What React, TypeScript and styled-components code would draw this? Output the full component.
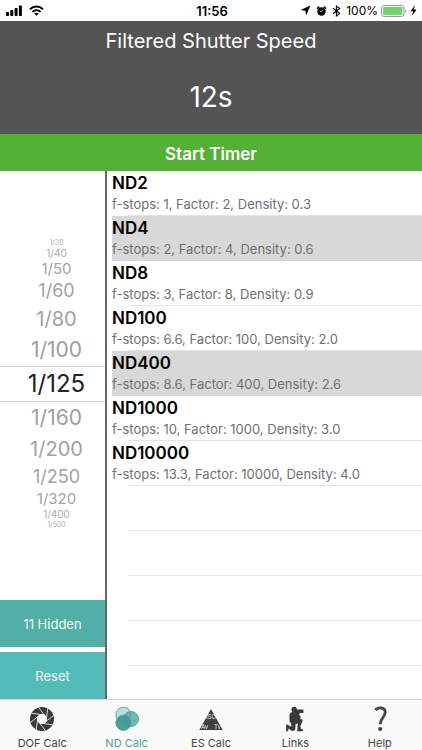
import React, { useState } from "react";
import styled, { createGlobalStyle } from "styled-components";

const GlobalStyle = createGlobalStyle`
  *, *::before, *::after { box-sizing: border-box; }
  html, body { margin: 0; padding: 0; height: 100%; }
  #root { height: 100%; }
  body, button, input {
    font-family: Inter, "Liberation Sans", sans-serif;
  }
  button { border: 0; padding: 0; margin: 0; background: none; cursor: pointer; color: inherit; }
`;

const Screen = styled.div`
  display: flex;
  flex-direction: column;
  min-height: 100%;
  background: #fff;
`;

const StatusBar = styled.div`
  display: grid;
  grid-template-columns: 1fr auto 1fr;
  align-items: center;
  height: 21px;
  padding: 0 5px;
  color: #000;
  font-size: 12px;
  line-height: 20px;
`;

const StatusGroup = styled.div<{ $end?: boolean }>`
  display: flex;
  align-items: center;
  gap: ${(p) => (p.$end ? "3px" : "7px")};
  justify-content: ${(p) => (p.$end ? "flex-end" : "flex-start")};
`;

const StatusIcons = styled.span`
  display: flex;
  align-items: center;
  gap: 5px;
  padding-right: 2px;
`;

const Clock = styled.time`
  padding-left: 2px;
  font-size: 13px;
  font-weight: 600;
`;

const Header = styled.header`
  display: flex;
  flex-direction: column;
  align-items: center;
  height: 113px;
  background: #545454;
  color: #fff;
`;

const Title = styled.h1`
  margin: 0;
  padding-top: 6px;
  font-size: 20px;
  font-weight: 400;
  line-height: 28px;
`;

const Speed = styled.output`
  padding-top: 24px;
  font-size: 28px;
  line-height: 36px;
`;

const TimerButton = styled.button`
  height: 37px;
  padding-top: 2px;
  background: #53b135;
  color: #fff;
  font-size: 17px;
  font-weight: 600;
`;

const Main = styled.main`
  display: grid;
  grid-template-columns: minmax(107px, 25%) 1fr;
  flex: 1;
`;

const Side = styled.section`
  display: flex;
  flex-direction: column;
  border-right: 2px solid #666;
`;

const Wheel = styled.fieldset`
  display: flex;
  flex: 1;
  flex-direction: column;
  justify-content: center;
  min-width: 0;
  margin: 0;
  padding: 0;
  border: 0;
`;

const WheelItem = styled.label<{ $height: number; $size: number; $tone: string }>`
  display: flex;
  align-items: center;
  justify-content: center;
  height: ${(p) => p.$height}px;
  padding-left: 8px;
  color: ${(p) => p.$tone};
  font-size: ${(p) => p.$size}px;
  line-height: ${(p) => p.$height}px;
  cursor: pointer;
  border: 0 solid #d4d4d4;
  &:has(input:checked) {
    border-width: 1px 0;
  }
`;

const WheelInput = styled.input`
  appearance: none;
  width: 0;
  height: 0;
  margin: 0;
`;

const SideActions = styled.div`
  display: flex;
  flex-direction: column;
  gap: 5px;
  padding-top: 4px;
`;

const SideButton = styled.button<{ $fill: string }>`
  height: 47px;
  background: ${(p) => p.$fill};
  color: #eefaf8;
  font-size: 13px;
`;

const FilterList = styled.ul`
  margin: 0;
  padding: 0 0 0 5px;
  list-style: none;
`;

const FilterItem = styled.li`
  height: 45px;
`;

const FilterRow = styled.button`
  display: block;
  position: relative;
  width: 100%;
  height: 45px;
  text-align: left;
  &[aria-pressed="true"] {
    background: #d8d8d8;
  }
  &[aria-pressed="false"]::after {
    content: "";
    position: absolute;
    inset: auto 0 0 16px;
    height: 1px;
    background: #e4e4e4;
  }
`;

const EmptyRow = styled.li`
  height: 45px;
  margin-left: 16px;
  border-bottom: 1px solid #e8e8e8;
`;

const FilterName = styled.span`
  display: block;
  color: #000;
  font-size: 17px;
  font-weight: 600;
  line-height: 22px;
`;

const FilterInfo = styled.span`
  display: block;
  color: #707070;
  font-size: 13px;
  line-height: 21px;
`;

const TabBar = styled.nav`
  display: grid;
  grid-template-columns: repeat(5, 1fr);
  height: 51px;
  border-top: 1px solid #d6d6d6;
  background: #f9f9f9;
`;

const Tab = styled.a<{ $active?: boolean }>`
  display: flex;
  flex-direction: column;
  align-items: center;
  padding-top: 6px;
  color: ${(p) => (p.$active ? "#4a9e97" : "#454545")};
  font-size: 11px;
  line-height: 22px;
  text-decoration: none;
  svg {
    display: block;
    width: 26px;
    height: 26px;
  }
`;

const SignalIcon = () => (
  <svg width="17" height="11" viewBox="0 0 17 11" fill="#000" aria-label="Signal">
    <rect x="1" y="7" width="3" height="4" rx="0.8" />
    <rect x="5.3" y="5" width="3" height="6" rx="0.8" />
    <rect x="9.6" y="3" width="3" height="8" rx="0.8" />
    <rect x="13.9" y="0.5" width="3" height="10.5" rx="0.8" />
  </svg>
);

const WifiIcon = () => (
  <svg width="15" height="11" viewBox="0 0 15 11" fill="none" stroke="#000" strokeWidth="2" aria-label="Wi-Fi">
    <path d="M1 4.3C4.7.6 10.3.6 14 4.3" />
    <path d="M3.4 6.9C5.8 4.6 9.2 4.6 11.6 6.9" />
    <path d="M7.5 10.8 5.2 8.6C6.5 7.5 8.5 7.5 9.8 8.6Z" fill="#000" stroke="none" />
  </svg>
);

const LocationIcon = () => (
  <svg width="11" height="11" viewBox="0 0 11 11" aria-label="Location">
    <path d="M10.4.6 6.2 10.4 5.3 5.7.6 4.9Z" fill="#000" />
  </svg>
);

const AlarmIcon = () => (
  <svg width="11" height="12" viewBox="0 0 12 12" aria-label="Alarm">
    <circle cx="6" cy="6.6" r="4.6" fill="#000" />
    <path d="M1.6 3 3 1.7M10.4 3 9 1.7" stroke="#000" strokeWidth="1.7" strokeLinecap="round" />
    <path d="M4 5.6 6 6.8 7.8 5" fill="none" stroke="#fff" strokeWidth="0.9" />
  </svg>
);

const BluetoothIcon = () => (
  <svg width="9" height="12" viewBox="0 0 9 12" aria-label="Bluetooth">
    <path d="M1 3.3 7.6 8.6 4.4 11V1L7.6 3.4 1 8.7" fill="none" stroke="#000" strokeWidth="1.1" />
  </svg>
);

const BatteryIcon = () => (
  <svg width="26" height="12" viewBox="0 0 26 12" aria-label="Battery">
    <rect x="0.5" y="0.5" width="22.5" height="11" rx="2.6" fill="#fff" stroke="#999" />
    <rect x="2" y="2" width="19.5" height="8" rx="1.3" fill="#72d568" />
    <path d="M24.2 4C25.8 4.7 25.8 7.3 24.2 8Z" fill="#999" />
  </svg>
);

const BoltIcon = () => (
  <svg width="7" height="11" viewBox="0 0 7 11" aria-label="Charging">
    <path d="M4.8.3.4 6.2H3.1L2 10.7 6.6 4.5H3.9Z" fill="#000" />
  </svg>
);

const ApertureIcon = () => (
  <svg viewBox="0 0 26 26" aria-hidden="true">
    <circle cx="13" cy="13" r="12" fill="#3a3a3a" />
    <path d="M10.9 7.9 15.1 7.9 18.1 10.9 18.1 15.1 15.1 18.1 10.9 18.1 7.9 15.1 7.9 10.9Z" fill="#f9f9f9" />
    {[0, 45, 90, 135, 180, 225, 270, 315].map((angle) => (
      <path
        key={angle}
        d="M14.6 8 9.6 1.4"
        transform={`rotate(${angle} 13 13)`}
        fill="none"
        stroke="#f9f9f9"
        strokeWidth="0.8"
      />
    ))}
  </svg>
);

const FiltersIcon = () => (
  <svg viewBox="0 0 26 26" stroke="#4a9e97" strokeWidth="0.8" aria-hidden="true">
    <circle cx="9.4" cy="8.8" r="7.6" fill="#b9dfdb" />
    <circle cx="17" cy="13" r="7.6" fill="#4aa9a2" fillOpacity="0.8" />
    <circle cx="9.4" cy="16.8" r="7.6" fill="#40988f" fillOpacity="0.94" />
  </svg>
);

const TriangleLabel = styled.text`
  fill: #f4f4f4;
  font-family: Inter, sans-serif;
  font-size: 6px;
`;

const ExposureIcon = () => (
  <svg viewBox="0 0 26 26" aria-hidden="true">
    <path d="M13 3 24.7 24H1.3Z" fill="#3f3f3f" />
    <TriangleLabel x="13" y="13" textAnchor="middle">ISO</TriangleLabel>
    <TriangleLabel x="3" y="23">Av</TriangleLabel>
    <TriangleLabel x="16" y="23">Tv</TriangleLabel>
  </svg>
);

const PhotographerIcon = () => (
  <svg viewBox="0 0 26 26" fill="#3a3a3a" aria-hidden="true">
    <path d="M9.4 3.6C9.3.2 14.2-.2 14.8 2.8L15 3.6H21.4V7H17.8L17.2 9.2 18.6 10.2 18.2 13 19.2 13.2C20.8 13.6 20.8 15 20.2 16L18.4 20 18.7 22.6 20.8 23.6V25.2H15.2L15.6 19.6 16 17.4 13.6 18.2 13.2 23.4C12.6 25.2 10 25 8.8 24.2L6.8 22.6 5.9 25.2H4.3L4 18.8 5.8 18.6 7.4 20 9.4 20.6 9 17.2 7.6 15.6 7.4 9.4C7.4 7.4 8.6 6.4 10.2 6.2Z" />
  </svg>
);

const HelpIcon = () => (
  <svg viewBox="0 0 26 26" aria-hidden="true">
    <path
      d="M8.5 4.2C10.5 1.2 18.2.7 18.2 6.2C18.2 11.4 13.4 11.3 13.3 18.2"
      fill="none"
      stroke="#454545"
      strokeWidth="2.8"
    />
    <circle cx="13.2" cy="23" r="2.1" fill="#454545" />
  </svg>
);

const stops = [
  { speed: "1/30", height: 8, size: 7, tone: "#b0b0b0" },
  { speed: "1/40", height: 13, size: 10, tone: "#a8a8a8" },
  { speed: "1/50", height: 18, size: 15, tone: "#a4a4a4" },
  { speed: "1/60", height: 26, size: 18, tone: "#a2a2a2" },
  { speed: "1/80", height: 30, size: 20, tone: "#a2a2a2" },
  { speed: "1/100", height: 32, size: 21, tone: "#a0a0a0" },
  { speed: "1/125", height: 36, size: 24, tone: "#222" },
  { speed: "1/160", height: 32, size: 21, tone: "#a0a0a0" },
  { speed: "1/200", height: 30, size: 20, tone: "#a2a2a2" },
  { speed: "1/250", height: 26, size: 18, tone: "#a2a2a2" },
  { speed: "1/320", height: 18, size: 15, tone: "#a4a4a4" },
  { speed: "1/400", height: 13, size: 10, tone: "#a8a8a8" },
  { speed: "1/500", height: 8, size: 7, tone: "#b0b0b0" },
];

const filters = [
  { name: "ND2", stops: "1", factor: "2", density: "0.3" },
  { name: "ND4", stops: "2", factor: "4", density: "0.6" },
  { name: "ND8", stops: "3", factor: "8", density: "0.9" },
  { name: "ND100", stops: "6.6", factor: "100", density: "2.0" },
  { name: "ND400", stops: "8.6", factor: "400", density: "2.6" },
  { name: "ND1000", stops: "10", factor: "1000", density: "3.0" },
  { name: "ND10000", stops: "13.3", factor: "10000", density: "4.0" },
];

const tabs = [
  { label: "DOF Calc", Icon: ApertureIcon },
  { label: "ND Calc", Icon: FiltersIcon, active: true },
  { label: "ES Calc", Icon: ExposureIcon },
  { label: "Links", Icon: PhotographerIcon },
  { label: "Help", Icon: HelpIcon },
];

export default function App() {
  const [selected, setSelected] = useState<string[]>(["ND4", "ND400"]);

  const toggle = (name: string) =>
    setSelected((current) =>
      current.includes(name) ? current.filter((n) => n !== name) : [...current, name]
    );

  return (
    <Screen>
      <GlobalStyle />
      <StatusBar>
        <StatusGroup>
          <SignalIcon />
          <WifiIcon />
        </StatusGroup>
        <Clock>11:56</Clock>
        <StatusGroup $end>
          <StatusIcons>
            <LocationIcon />
            <AlarmIcon />
            <BluetoothIcon />
          </StatusIcons>
          <span>100%</span>
          <BatteryIcon />
          <BoltIcon />
        </StatusGroup>
      </StatusBar>
      <Header>
        <Title>Filtered Shutter Speed</Title>
        <Speed>12s</Speed>
      </Header>
      <TimerButton type="button">Start Timer</TimerButton>
      <Main>
        <Side>
          <Wheel aria-label="Shutter speed">
            {stops.map((s) => (
              <WheelItem key={s.speed} $height={s.height} $size={s.size} $tone={s.tone}>
                <WheelInput type="radio" name="speed" value={s.speed} defaultChecked={s.speed === "1/125"} />
                {s.speed}
              </WheelItem>
            ))}
          </Wheel>
          <SideActions>
            <SideButton type="button" $fill="#52afa7">11 Hidden</SideButton>
            <SideButton type="button" $fill="#53bbb7" onClick={() => setSelected([])}>Reset</SideButton>
          </SideActions>
        </Side>
        <FilterList>
          {filters.map((f) => (
            <FilterItem key={f.name}>
              <FilterRow type="button" aria-pressed={selected.includes(f.name)} onClick={() => toggle(f.name)}>
                <FilterName>{f.name}</FilterName>
                <FilterInfo>{`f-stops: ${f.stops}, Factor: ${f.factor}, Density: ${f.density}`}</FilterInfo>
              </FilterRow>
            </FilterItem>
          ))}
          {[1, 2, 3, 4].map((n) => (
            <EmptyRow key={n} aria-hidden="true" />
          ))}
        </FilterList>
      </Main>
      <TabBar>
        {tabs.map(({ label, Icon, active }) => (
          <Tab key={label} href="#" $active={active} aria-current={active ? "page" : undefined}>
            <Icon />
            {label}
          </Tab>
        ))}
      </TabBar>
    </Screen>
  );
}
